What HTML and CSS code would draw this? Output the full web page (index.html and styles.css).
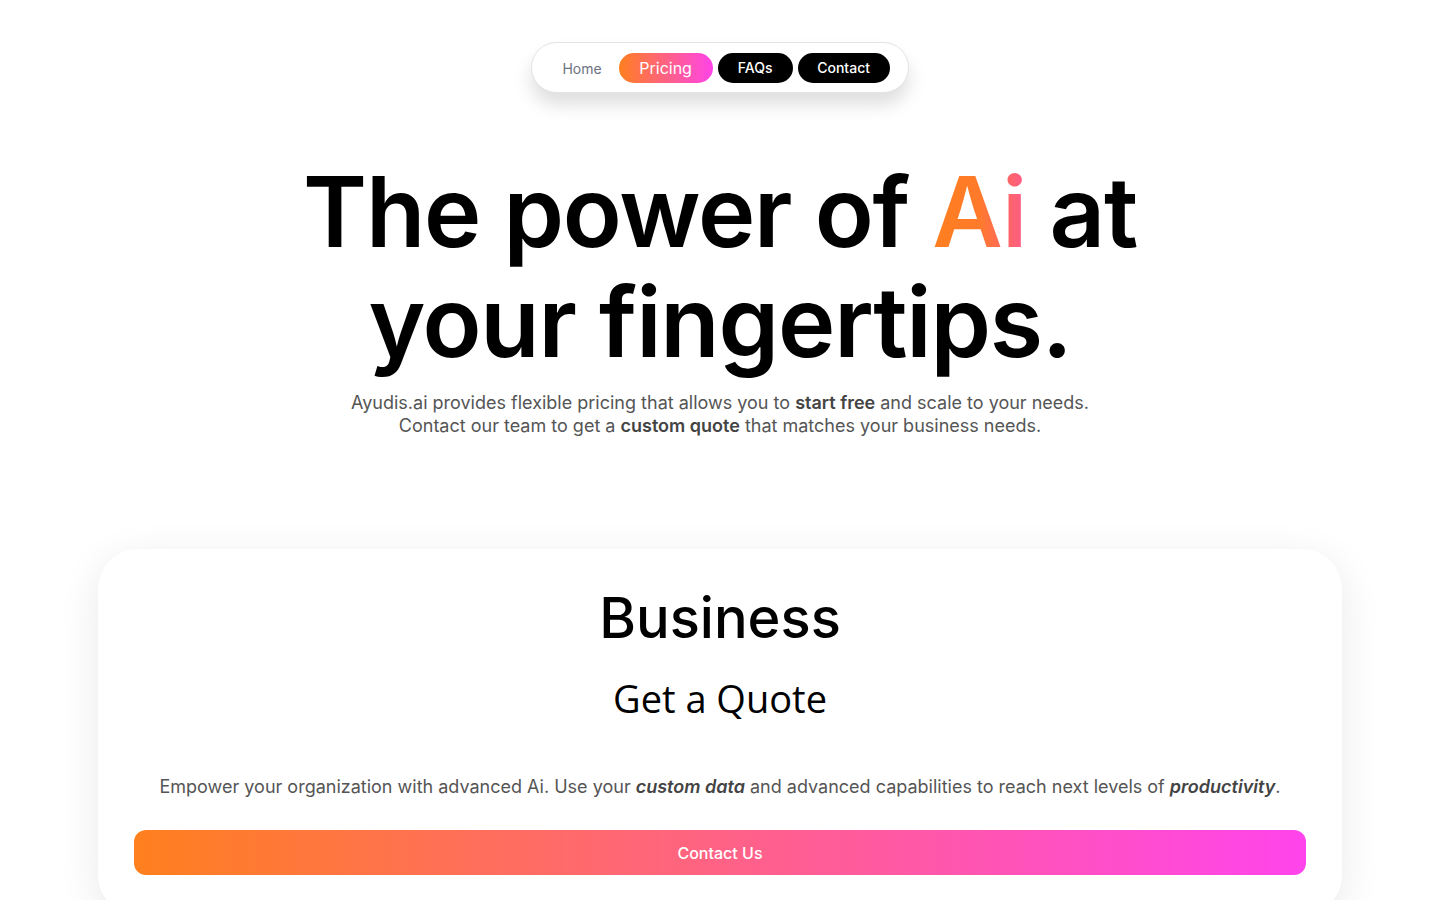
FILE: index.html
```html
<!DOCTYPE html>
<html lang="en">
<head>
<meta charset="utf-8">
<title>Pricing - Ayudis.ai</title>
<link rel="stylesheet" href="styles.css">
</head>
<body>
<header class="top">
  <nav class="nav">
    <a class="nav-link" href="#">Home</a>
    <a class="nav-pill nav-active" href="#">Pricing</a>
    <a class="nav-pill nav-dark" href="#">FAQs</a>
    <a class="nav-pill nav-dark" href="#">Contact</a>
  </nav>
</header>
<main>
  <section class="hero">
    <h1 class="hero-title">The power of <span class="grad-text">Ai</span> at<br>your fingertips.</h1>
    <p class="hero-sub">Ayudis.ai provides flexible pricing that allows you to <strong>start free</strong> and scale to your needs.<br>Contact our team to get a <strong>custom quote</strong> that matches your business needs.</p>
  </section>
  <section class="plans">
    <div class="card">
      <h2 class="card-title">Business</h2>
      <p class="card-price">Get a Quote</p>
      <p class="card-desc">Empower your organization with advanced Ai. Use your <em>custom data</em> and advanced capabilities to reach next levels of <em>productivity</em>.</p>
      <a class="card-btn" href="#">Contact Us</a>
    </div>
  </section>
</main>
</body>
</html>
```
FILE: styles.css
```css
* { box-sizing: border-box; }
html, body { margin: 0; padding: 0; background: #fff; }
body { font-family: Inter, "Liberation Sans", sans-serif; color: #111; overflow: hidden; height: 900px; }
a { text-decoration: none; }

.top { display: flex; justify-content: center; padding-top: 42px; }
.nav {
  display: flex; align-items: center; gap: 5px;
  height: 51px; padding: 0 18px 0 30px;
  border: 1px solid #e3e3e6; border-radius: 999px; background: #fff;
  box-shadow: 0 12px 18px rgba(0,0,0,0.13);
}
.nav-link { font-size: 14px; color: #6b7280; margin-right: 12px; padding-top: 1px; }
.nav-pill {
  height: 30px; display: flex; align-items: center; justify-content: center;
  border-radius: 999px; color: #fff; font-size: 14px; font-weight: 500;
}
.nav-active {
  width: 94px; font-size: 16px; font-weight: 400;
  background: linear-gradient(90deg, #ff7f1f, #ff44e8);
}
.nav-dark { background: #000; }
.nav-dark:nth-of-type(3) { width: 75px; }
.nav-dark:nth-of-type(4) { width: 92px; }

.hero { text-align: center; padding-top: 64px; }
.hero-title {
  margin: 0; font-family: Inter, "Liberation Sans", sans-serif; font-weight: 600;
  font-size: 97px; line-height: 110px; letter-spacing: -1.2px; color: #000;
}
.grad-text {
  background: linear-gradient(90deg, #ff7f1f 0%, #ff7a2a 50%, #ff5a8c 100%);
  -webkit-background-clip: text; background-clip: text; color: transparent;
}
.hero-sub {
  margin: 14px 0 0; font-size: 18px; line-height: 23px; color: #555;
}
.hero-sub strong { color: #444; font-weight: 600; }

.plans { padding: 112px 98px 0; }
.card {
  background: #fff; border-radius: 40px; padding: 34px 36px 40px;
  box-shadow: 0 10px 40px rgba(0,0,0,0.09);
  display: flex; flex-direction: column; align-items: center; text-align: center;
}
.card-title {
  margin: 0; font-family: Inter, "Liberation Sans", sans-serif; font-weight: 500;
  font-size: 56px; line-height: 70px; color: #000;
}
.card-price {
  margin: 21px 0 0; font-family: "Open Sans", sans-serif; font-size: 38px; line-height: 48px; color: #000;
}
.card-desc { margin: 52px 0 0; font-size: 18px; line-height: 26px; color: #555; }
.card-desc em { font-weight: 600; color: #444; }
.card-btn {
  margin-top: 30px; align-self: stretch; height: 45px; border-radius: 12px;
  display: flex; align-items: center; justify-content: center;
  background: linear-gradient(90deg, #ff801e, #ff44ec);
  color: #fff; font-size: 16px; font-weight: 500;
}
```
